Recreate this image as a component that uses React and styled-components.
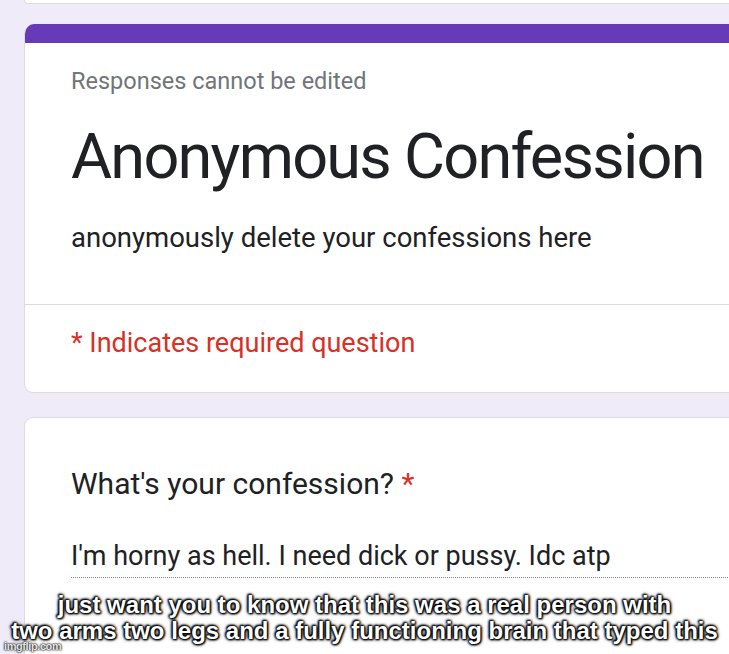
import React from "react";
import styled, { createGlobalStyle } from "styled-components";

const GlobalStyle = createGlobalStyle`
  html, body {
    margin: 0;
    padding: 0;
    background: #f0ebf8;
    overflow: hidden;
  }
  body {
    font-family: Roboto, "Noto Sans", Arial, sans-serif;
  }
`;

function App() {
  return (
    <>
      <GlobalStyle />
      <Page>
        <Column>
          <PrevCard />
          <HeaderCard>
            <TopBar />
            <HeaderBody>
              <Notice>Responses cannot be edited</Notice>
              <Title>Anonymous Confession</Title>
              <Description>anonymously delete your confessions here</Description>
            </HeaderBody>
            <RequiredNote>* Indicates required question</RequiredNote>
          </HeaderCard>
          <QuestionCard>
            <Question>
              What's your confession? <Star>*</Star>
            </Question>
            <Answer>I'm horny as hell. I need dick or pussy. Idc atp</Answer>
          </QuestionCard>
        </Column>
        <Caption>
          just want you to know that this was a real person with
          <br />
          two arms two legs and a fully functioning brain that typed this
        </Caption>
        <Watermark>imgflip.com</Watermark>
      </Page>
    </>
  );
}

export default App;

const Page = styled.div`
  position: relative;
  width: 729px;
  height: 654px;
  overflow: hidden;
  background: #f0ebf8;
`;

const Column = styled.div`
  display: flex;
  flex-direction: column;
  gap: 24px;
  padding-left: 24px;
  width: 780px;
`;

const Card = styled.div`
  background: #fff;
  border: 1px solid #dadce0;
  border-right: none;
  border-radius: 9px 0 0 9px;
  box-sizing: border-box;
`;

const PrevCard = styled(Card)`
  height: 4px;
  border-top: none;
  border-radius: 0 0 0 9px;
  margin-bottom: -4px;
`;

const HeaderCard = styled(Card)`
  border-top: none;
  border-radius: 10px 0 0 9px;
  overflow: hidden;
`;

const TopBar = styled.div`
  height: 19px;
  background: #673ab7;
  margin-left: -1px;
`;

const HeaderBody = styled.div`
  padding: 24px 0 49px 46px;
  border-bottom: 1px solid #dadce0;
`;

const Notice = styled.div`
  font-size: 23.5px;
  line-height: 28px;
  color: #70757a;
`;

const Title = styled.div`
  margin-top: 24px;
  font-size: 63px;
  line-height: 76px;
  color: #202124;
  letter-spacing: -1.75px;
`;

const Description = styled.div`
  margin-top: 26px;
  font-size: 27.5px;
  line-height: 34px;
  color: #202124;
`;

const RequiredNote = styled.div`
  padding: 22px 0 33px 46px;
  font-size: 27px;
  line-height: 32px;
  color: #d93025;
`;

const QuestionCard = styled(Card)`
  padding: 49px 0 0 46px;
  height: 300px;
`;

const Question = styled.div`
  font-size: 30px;
  line-height: 34px;
  color: #202124;
`;

const Star = styled.span`
  color: #d93025;
`;

const Answer = styled.div`
  margin-top: 39px;
  padding-bottom: 5px;
  font-size: 27px;
  line-height: 32px;
  color: #202124;
  border-bottom: 1px dotted #8a8a8a;
`;

const Caption = styled.div`
  position: absolute;
  left: 0;
  right: 0;
  top: 592px;
  text-align: center;
  font-family: "Liberation Sans", Arial, sans-serif;
  font-weight: bold;
  font-size: 24px;
  line-height: 26px;
  color: #fff;
  text-shadow:
    0 0 2px #000,
    0 0 2px #000,
    0 0 3px #000,
    0 0 4px #000,
    1px 1px 2px #000,
    -1px -1px 2px #000;
`;

const Watermark = styled.div`
  position: absolute;
  left: 4px;
  bottom: 2px;
  font-family: "Liberation Sans", Arial, sans-serif;
  font-weight: bold;
  font-size: 11px;
  letter-spacing: -0.4px;
  color: rgba(255, 255, 255, 0.9);
  text-shadow: 0 0 2px #000, 0 0 2px #000;
`;
